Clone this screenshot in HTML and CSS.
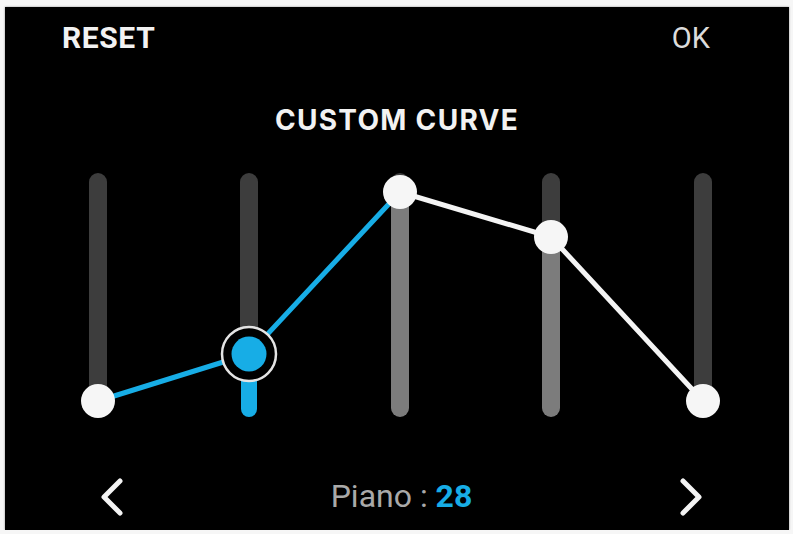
FILE: index.html
```html
<!DOCTYPE html>
<html>
<head>
<meta charset="utf-8">
<link rel="stylesheet" href="styles.css">
</head>
<body>
<div class="screen">
  <div class="header">
    <span class="reset">RESET</span>
    <span class="ok">OK</span>
  </div>
  <div class="title">CUSTOM CURVE</div>
  <svg class="chart" width="784" height="260" viewBox="0 0 784 260">
    <g stroke-linecap="round" stroke-width="18" fill="none">
      <line x1="93" y1="17" x2="93" y2="243" stroke="#3d3d3d"/>
      <line x1="244" y1="17" x2="244" y2="189" stroke="#3d3d3d"/>
      <line x1="395" y1="17" x2="395" y2="30" stroke="#3d3d3d"/>
      <line x1="395" y1="30" x2="395" y2="243" stroke="#7c7c7c"/>
      <line x1="546" y1="17" x2="546" y2="72" stroke="#3d3d3d"/>
      <line x1="546" y1="72" x2="546" y2="243" stroke="#7c7c7c"/>
      <line x1="698" y1="17" x2="698" y2="243" stroke="#3d3d3d"/>
    </g>
    <line x1="244" y1="200" x2="244" y2="244" stroke="#17ade6" stroke-width="16" stroke-linecap="round"/>
    <polyline points="93,236 244,189 395,27" fill="none" stroke="#17ade6" stroke-width="5" stroke-linejoin="round"/>
    <polyline points="395,27 546,72 698,236" fill="none" stroke="#f4f4f4" stroke-width="5" stroke-linejoin="round"/>
    <circle cx="93" cy="236" r="17" fill="#f6f6f6"/>
    <circle cx="395" cy="27" r="17" fill="#f6f6f6"/>
    <circle cx="546" cy="72" r="17" fill="#f6f6f6"/>
    <circle cx="698" cy="236" r="17" fill="#f6f6f6"/>
    <circle cx="244" cy="189" r="27" fill="#000" stroke="#e4e4e4" stroke-width="2.5"/>
    <circle cx="244" cy="189" r="17.5" fill="#17ade6"/>
  </svg>
  <div class="footer">
    <svg class="chev" width="30" height="40" viewBox="0 0 30 40"><polyline points="25,5 9,21 25,37" fill="none" stroke="#f4f4f4" stroke-width="5" stroke-linecap="round" stroke-linejoin="round"/></svg>
    <div class="value"><span class="label">Piano : </span><span class="num">28</span></div>
    <svg class="chev" width="30" height="40" viewBox="0 0 30 40"><polyline points="5,5 21,21 5,37" fill="none" stroke="#f4f4f4" stroke-width="5" stroke-linecap="round" stroke-linejoin="round"/></svg>
  </div>
</div>
</body>
</html>
```
FILE: styles.css
```css
html, body {
  margin: 0;
  padding: 0;
  background: #f6f6f6;
}
.screen {
  margin: 7px 4px 0 5px;
  width: 784px;
  height: 523px;
  background: #000;
  display: flex;
  flex-direction: column;
  font-family: Roboto, "Liberation Sans", sans-serif;
  box-shadow: 0 0 2px rgba(0,0,0,0.4);
}
.header {
  display: flex;
  justify-content: space-between;
  padding: 16px 79px 0 57px;
  height: 30px;
  line-height: 30px;
  font-size: 29px;
}
.reset {
  font-weight: 700;
  color: #f2f2f2;
  font-size: 30px;
  letter-spacing: 0.6px;
}
.ok {
  font-weight: 400;
  color: #dcdcdc;
}
.title {
  margin-top: 52px;
  text-align: center;
  font-family: Inter, "Liberation Sans", sans-serif;
  font-weight: 700;
  font-size: 28px;
  line-height: 30px;
  letter-spacing: 1.3px;
  color: #f2f2f2;
}
.chart {
  display: block;
  margin-top: 30px;
}
.footer {
  margin-top: 51px;
  display: flex;
  justify-content: space-between;
  align-items: center;
  padding: 0 81px 0 90px;
  height: 40px;
}
.chev {
  display: block;
}
.value {
  font-size: 32px;
  line-height: 40px;
}
.label {
  color: #a9a9a9;
}
.num {
  color: #17ade6;
  font-weight: 700;
}
```
